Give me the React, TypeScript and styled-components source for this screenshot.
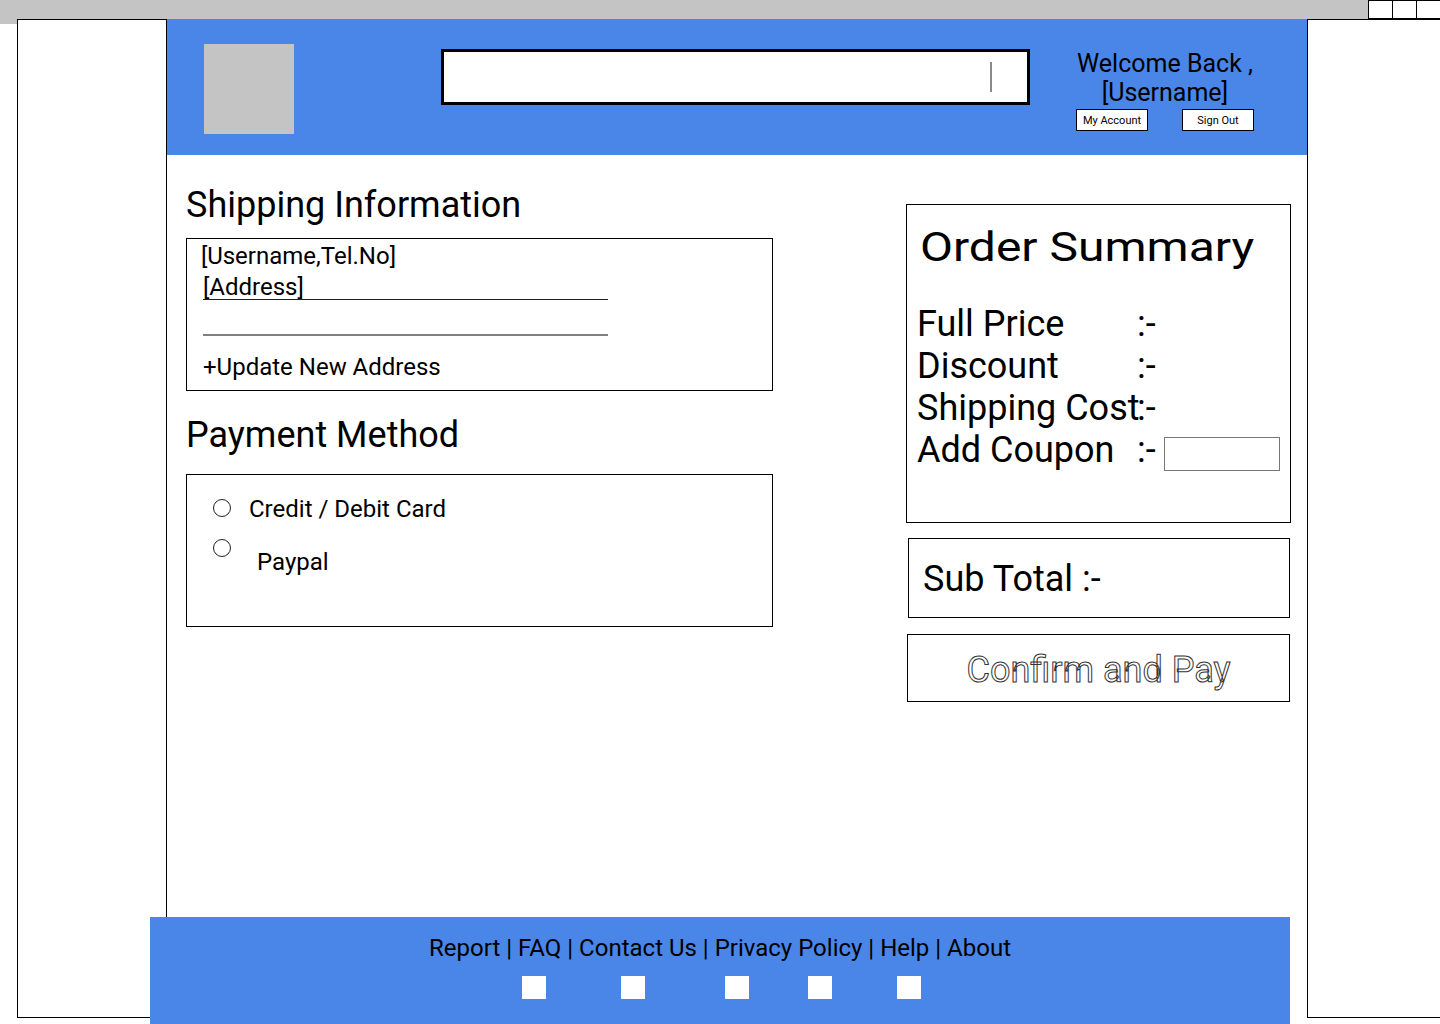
import React from "react";
import styled, { createGlobalStyle } from "styled-components";

const GlobalStyle = createGlobalStyle`
  html, body {
    margin: 0;
    padding: 0;
    background: #ffffff;
  }
  body {
    font-family: Roboto, "Liberation Sans", Arial, sans-serif;
    color: #000000;
  }
  * {
    box-sizing: border-box;
  }
`;

const BLUE = "#4A86E8";
const GRAY = "#C4C4C4";

const Page = styled.div`
  width: 1440px;
  height: 1024px;
  overflow: hidden;
  background: #ffffff;
`;

const TopBar = styled.div`
  height: 19px;
  background: ${GRAY};
  display: flex;
  justify-content: flex-end;
`;

const WinButton = styled.div`
  width: 24px;
  height: 19px;
  background: #ffffff;
  border-top: 1px solid #000;
  border-bottom: 1px solid #000;
  border-left: 1px solid #000;
`;

const Body = styled.div`
  display: flex;
  align-items: flex-start;
`;

const Gutter = styled.div`
  width: 17px;
  height: 5px;
  flex: none;
  background: ${GRAY};
`;

const SidePanel = styled.div<{ $width: number; $openRight?: boolean }>`
  flex: none;
  width: ${(p) => p.$width}px;
  height: 999px;
  background: #ffffff;
  border: 1px solid #000;
  ${(p) => (p.$openRight ? "border-right: none;" : "")}
`;

const Main = styled.div`
  flex: none;
  width: 1140px;
  display: flex;
  flex-direction: column;
`;

const Header = styled.header`
  height: 136px;
  background: ${BLUE};
  display: flex;
  align-items: flex-start;
  padding-left: 37px;
`;

const Logo = styled.div`
  width: 90px;
  height: 90px;
  margin-top: 25px;
  background: ${GRAY};
  flex: none;
`;

const SearchBox = styled.div`
  width: 589px;
  height: 56px;
  margin-top: 30px;
  margin-left: 147px;
  flex: none;
  background: #ffffff;
  border: 3px solid #000;
  display: flex;
  align-items: center;
  justify-content: flex-end;
  padding-right: 35px;
`;

const Caret = styled.div`
  width: 2px;
  height: 30px;
  background: #8a8a8a;
`;

const Welcome = styled.div`
  margin-top: 30px;
  margin-left: 46px;
  display: flex;
  flex-direction: column;
  align-items: center;
`;

const WelcomeLine = styled.div`
  font-size: 25px;
  line-height: 29px;
  white-space: nowrap;
  text-align: center;
`;

const ButtonRow = styled.div`
  display: flex;
  gap: 34px;
  margin-top: 2px;
`;

const SmallButton = styled.button`
  width: 72px;
  height: 22px;
  padding: 0;
  background: #ffffff;
  border: 1px solid #000;
  font-family: Roboto, "Liberation Sans", Arial, sans-serif;
  font-size: 11px;
  color: #000;
  display: flex;
  align-items: center;
  justify-content: center;
  white-space: nowrap;
`;

const Content = styled.main`
  height: 762px;
  display: flex;
  padding-left: 19px;
`;

const LeftCol = styled.section`
  width: 587px;
  flex: none;
  display: flex;
  flex-direction: column;
`;

const SectionTitle = styled.h2<{ $top: number; $bottom: number }>`
  font-size: 36px;
  line-height: 42px;
  font-weight: 400;
  margin: ${(p) => p.$top}px 0 ${(p) => p.$bottom}px;
  white-space: nowrap;
`;

const Panel = styled.div`
  height: 153px;
  border: 1px solid #000;
  background: #ffffff;
`;

const ShippingPanel = styled(Panel)`
  padding: 4px 0 0 14px;
  display: flex;
  flex-direction: column;
  align-items: flex-start;
`;

const InfoLine = styled.div`
  font-size: 24px;
  line-height: 26px;
  white-space: nowrap;
`;

const AddressField = styled.div`
  width: 405px;
  height: 29px;
  margin: 2px 0 0 2px;
  padding-top: 4px;
  font-size: 24px;
  line-height: 24px;
  border-bottom: 1px solid #222;
`;

const BlankField = styled.div`
  width: 405px;
  height: 36px;
  margin-left: 2px;
  border-bottom: 2px solid #808080;
`;

const UpdateLink = styled.div`
  margin: 17px 0 0 2px;
  font-size: 24px;
  line-height: 28px;
  white-space: nowrap;
`;

const PaymentPanel = styled(Panel)`
  padding: 20px 0 0 26px;
  display: flex;
  flex-direction: column;
`;

const OptionRow = styled.label<{ $top: number }>`
  display: flex;
  align-items: flex-start;
  margin-top: ${(p) => p.$top}px;
`;

const Radio = styled.span<{ $top: number }>`
  flex: none;
  width: 18px;
  height: 18px;
  margin-top: ${(p) => p.$top}px;
  border-radius: 50%;
  border: 1px solid #222;
  background: #fff;
`;

const OptionLabel = styled.span<{ $left: number; $top: number }>`
  margin-left: ${(p) => p.$left}px;
  margin-top: ${(p) => p.$top}px;
  font-size: 24px;
  line-height: 28px;
  white-space: nowrap;
`;

const RightCol = styled.aside`
  width: 385px;
  flex: none;
  margin-left: 133px;
  padding-top: 49px;
  display: flex;
  flex-direction: column;
  align-items: flex-start;
`;

const OrderPanel = styled.div`
  width: 385px;
  height: 319px;
  border: 1px solid #000;
  padding: 19px 0 0 10px;
`;

const OrderTitle = styled.h1`
  margin: 0 0 0 3px;
  font-size: 40px;
  line-height: 48px;
  font-weight: 400;
  white-space: nowrap;
  transform: scaleX(1.2);
  transform-origin: left center;
`;

const SummaryList = styled.div`
  margin-top: 31px;
  display: flex;
  flex-direction: column;
`;

const SummaryRow = styled.div`
  display: flex;
  align-items: flex-start;
  height: 42px;
  font-size: 36px;
  line-height: 42px;
  white-space: nowrap;
`;

const SummaryLabel = styled.span`
  width: 220px;
  flex: none;
`;

const CouponInput = styled.div`
  width: 116px;
  height: 34px;
  margin: 8px 0 0 8px;
  border: 1px solid #777;
  background: #fff;
`;

const SubTotalPanel = styled.div`
  width: 382px;
  height: 80px;
  margin: 15px 0 0 2px;
  border: 1px solid #000;
  display: flex;
  align-items: center;
  padding: 2px 0 0 14px;
  font-size: 36px;
  line-height: 42px;
  white-space: nowrap;
`;

const ConfirmButton = styled.button`
  width: 383px;
  height: 68px;
  margin: 16px 0 0 1px;
  padding: 3px 0 0;
  border: 1px solid #000;
  background: #fff;
  display: flex;
  align-items: center;
  justify-content: center;
  font-family: Roboto, "Liberation Sans", Arial, sans-serif;
  font-size: 36px;
  color: #ffffff;
  -webkit-text-stroke: 1px #333;
  white-space: nowrap;
`;

const Footer = styled.footer`
  position: relative;
  z-index: 1;
  width: 1140px;
  height: 107px;
  margin-left: -17px;
  background: ${BLUE};
  display: flex;
  flex-direction: column;
  align-items: center;
  padding-top: 17px;
`;

const FooterLinks = styled.nav`
  font-size: 24px;
  line-height: 28px;
  white-space: nowrap;
`;

const IconRow = styled.div`
  display: flex;
  margin-top: 14px;
  padding-left: 2px;
`;

const FooterIcon = styled.div<{ $gap: number }>`
  width: 24px;
  height: 23px;
  margin-left: ${(p) => p.$gap}px;
  background: #ffffff;
`;

const iconGaps = [0, 75, 80, 59, 65];

export default function App() {
  return (
    <>
      <GlobalStyle />
      <Page>
        <TopBar>
          <WinButton />
          <WinButton />
          <WinButton />
        </TopBar>
        <Body>
          <Gutter />
          <SidePanel $width={150} />
          <Main>
            <Header>
              <Logo />
              <SearchBox>
                <Caret />
              </SearchBox>
              <Welcome>
                <WelcomeLine>Welcome Back ,</WelcomeLine>
                <WelcomeLine>[Username]</WelcomeLine>
                <ButtonRow>
                  <SmallButton>My Account</SmallButton>
                  <SmallButton>Sign Out</SmallButton>
                </ButtonRow>
              </Welcome>
            </Header>
            <Content>
              <LeftCol>
                <SectionTitle $top={29} $bottom={12}>
                  Shipping Information
                </SectionTitle>
                <ShippingPanel>
                  <InfoLine>[Username,Tel.No]</InfoLine>
                  <AddressField>[Address]</AddressField>
                  <BlankField />
                  <UpdateLink>+Update New Address</UpdateLink>
                </ShippingPanel>
                <SectionTitle $top={23} $bottom={18}>
                  Payment Method
                </SectionTitle>
                <PaymentPanel>
                  <OptionRow $top={0}>
                    <Radio $top={4} />
                    <OptionLabel $left={18} $top={0}>
                      Credit / Debit Card
                    </OptionLabel>
                  </OptionRow>
                  <OptionRow $top={16}>
                    <Radio $top={0} />
                    <OptionLabel $left={26} $top={9}>
                      Paypal
                    </OptionLabel>
                  </OptionRow>
                </PaymentPanel>
              </LeftCol>
              <RightCol>
                <OrderPanel>
                  <OrderTitle>Order Summary</OrderTitle>
                  <SummaryList>
                    <SummaryRow>
                      <SummaryLabel>Full Price</SummaryLabel>
                      <span>:-</span>
                    </SummaryRow>
                    <SummaryRow>
                      <SummaryLabel>Discount</SummaryLabel>
                      <span>:-</span>
                    </SummaryRow>
                    <SummaryRow>
                      <SummaryLabel>Shipping Cost</SummaryLabel>
                      <span>:-</span>
                    </SummaryRow>
                    <SummaryRow>
                      <SummaryLabel>Add Coupon</SummaryLabel>
                      <span>:-</span>
                      <CouponInput />
                    </SummaryRow>
                  </SummaryList>
                </OrderPanel>
                <SubTotalPanel>Sub Total :-</SubTotalPanel>
                <ConfirmButton>Confirm and Pay</ConfirmButton>
              </RightCol>
            </Content>
            <Footer>
              <FooterLinks>
                Report | FAQ | Contact Us | Privacy Policy | Help | About
              </FooterLinks>
              <IconRow>
                {iconGaps.map((g, i) => (
                  <FooterIcon key={i} $gap={g} />
                ))}
              </IconRow>
            </Footer>
          </Main>
          <SidePanel $width={133} $openRight />
        </Body>
      </Page>
    </>
  );
}
